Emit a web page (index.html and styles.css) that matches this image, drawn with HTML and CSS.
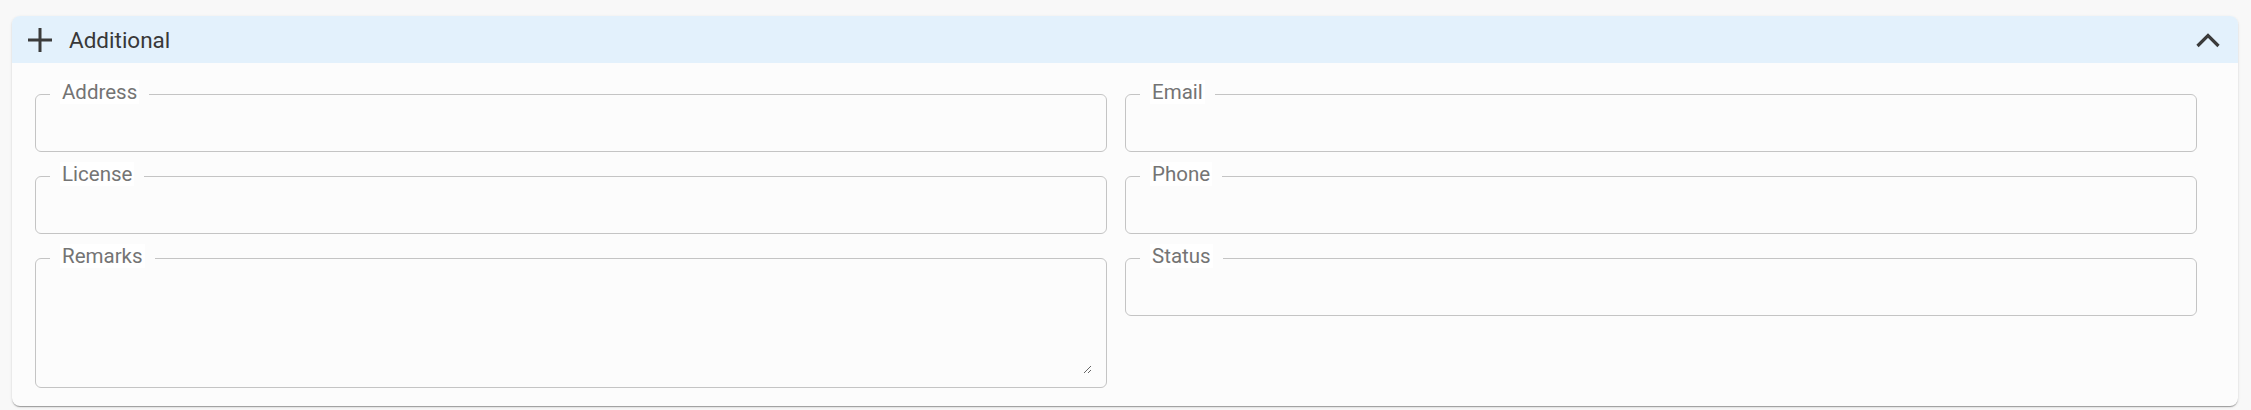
FILE: index.html
```html
<!DOCTYPE html>
<html lang="en">
<head>
<meta charset="utf-8">
<title>Additional</title>
<link rel="stylesheet" href="styles.css">
</head>
<body>
<section class="card">
  <header class="card-header">
    <svg class="icon-plus" width="26" height="26" viewBox="0 0 26 26" aria-hidden="true">
      <path d="M13 1V25M1 13H25" stroke="#3b3b3b" stroke-width="3" fill="none"/>
    </svg>
    <h2 class="title">Additional</h2>
    <svg class="icon-chevron" width="26" height="18" viewBox="0 0 26 18" aria-hidden="true">
      <path d="M2.5 15L13 4.5L23.5 15" stroke="#3b3b3b" stroke-width="3.2" fill="none"/>
    </svg>
  </header>
  <div class="card-body">
    <div class="col">
      <fieldset class="field"><legend><span>Address</span></legend><input class="input" type="text"></fieldset>
      <fieldset class="field"><legend><span>License</span></legend><input class="input" type="text"></fieldset>
      <fieldset class="field field-multi"><legend><span>Remarks</span></legend><textarea class="textarea"></textarea></fieldset>
    </div>
    <div class="col">
      <fieldset class="field"><legend><span>Email</span></legend><input class="input" type="text"></fieldset>
      <fieldset class="field"><legend><span>Phone</span></legend><input class="input" type="text"></fieldset>
      <fieldset class="field"><legend><span>Status</span></legend><input class="input" type="text"></fieldset>
    </div>
  </div>
</section>
</body>
</html>
```

FILE: styles.css
```css
html, body {
  margin: 0;
  padding: 0;
}
body {
  background: #f8f8f8;
  font-family: Roboto, "Liberation Sans", sans-serif;
  padding: 16px 13px 4px 12px;
}
.card {
  background: #fcfcfc;
  border-radius: 8px;
  box-shadow: 0 2px 1px -1px rgba(0,0,0,0.2), 0 1px 1px 0 rgba(0,0,0,0.14), 0 1px 3px 0 rgba(0,0,0,0.12);
  height: 390px;
  overflow: hidden;
}
.card-header {
  background: #e3f1fc;
  height: 47px;
  display: flex;
  align-items: center;
  padding: 0 17px 0 15px;
}
.icon-plus {
  flex: none;
  margin-top: 1px;
}
.title {
  margin: 0 0 0 16px;
  font-size: 22.5px;
  font-weight: 400;
  color: #383838;
  flex: 1;
  line-height: 28px;
}
.icon-chevron {
  flex: none;
  margin-top: 1px;
}
.card-body {
  display: grid;
  grid-template-columns: 1fr 1fr;
  column-gap: 18px;
  padding: 17px 41px 20px 23px;
}
.col {
  display: flex;
  flex-direction: column;
  gap: 10px;
}
.field {
  margin: 0;
  padding: 0 14px 0 14px;
  border: 1px solid #c4c4c4;
  border-radius: 6px;
  min-width: 0;
}
.field legend {
  padding: 0 10px 4px;
  margin-left: 0;
  font-size: 20.5px;
  line-height: 24px;
  color: #747474;
}
.field legend span {
  background: #ffffff;
  padding: 0 2px;
}
.input {
  display: block;
  width: 100%;
  height: 43px;
  border: none;
  background: transparent;
  outline: none;
  padding: 0;
  font: inherit;
}
.field-multi {
  padding-bottom: 13px;
}
.textarea {
  display: block;
  width: 100%;
  height: 102px;
  border: none;
  background: transparent;
  outline: none;
  padding: 0;
  resize: vertical;
  font: inherit;
  box-sizing: border-box;
}
```
